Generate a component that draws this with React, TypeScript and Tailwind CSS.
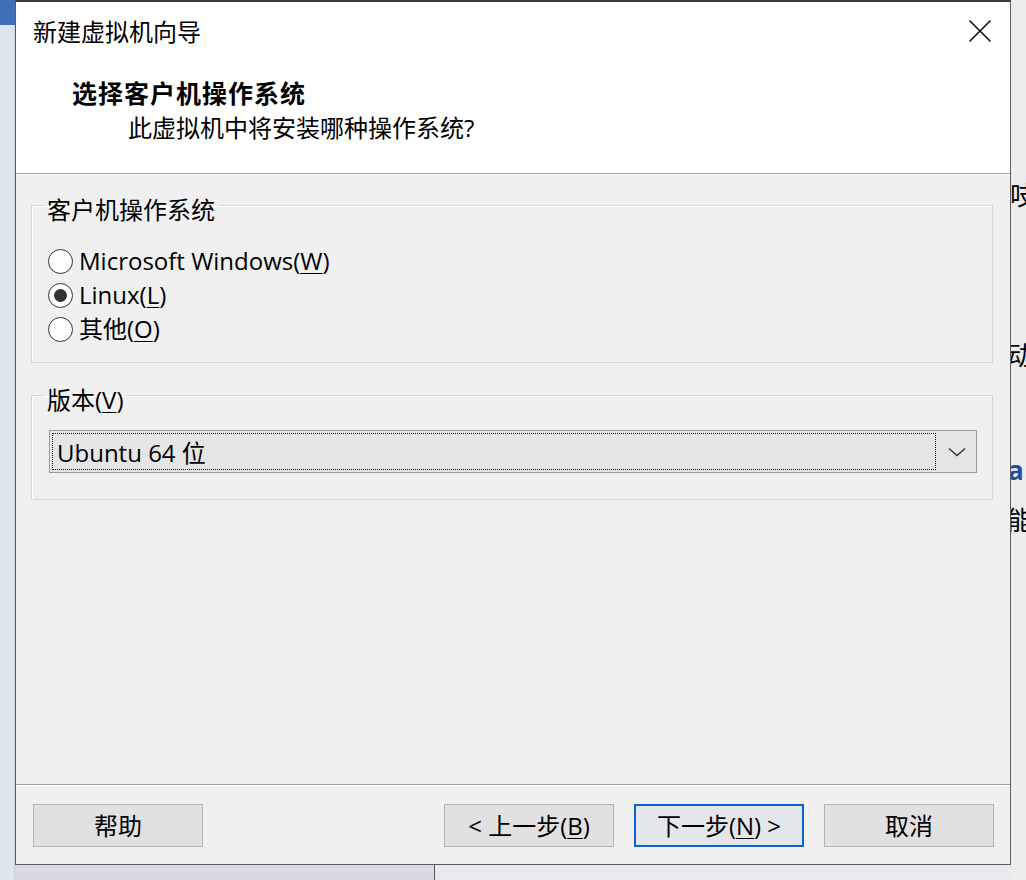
import { useState } from "react";

type Choice = "windows" | "linux" | "other";

// mnemonic letter, underlined like a Win32 accelerator
const Key = ({ k }: { k: string }) => <span className="underline underline-offset-[3px] decoration-1">{k}</span>;

const Radio = ({ on, onPick, children }: { on: boolean; onPick: () => void; children: React.ReactNode }) => (
  <button onClick={onPick} className="flex items-center h-[34px] gap-[6px] text-left">
    <span className="w-[25px] h-[25px] rounded-full border-[1.5px] border-[#333] bg-white flex items-center justify-center">
      {on && <span className="w-[13px] h-[13px] rounded-full bg-[#333]" />}
    </span>
    <span className="leading-[34px]">{children}</span>
  </button>
);

const WinButton = ({ focused, children }: { focused?: boolean; children: React.ReactNode }) => (
  <button
    className={
      focused
        ? "w-[170px] h-[43px] border-2 border-[#0a64c8] bg-[#e3e6ea] leading-[39px] text-center"
        : "w-[170px] h-[43px] border border-[#b4b4b4] bg-[#e1e1e1] leading-[41px] text-center"
    }
  >
    {children}
  </button>
);

export default function App() {
  const [os, setOs] = useState<Choice>("linux");

  return (
    <div className="w-[1026px] h-[880px] flex overflow-hidden bg-[#e8e8ec] text-[24px] text-black font-['Open_Sans','Noto_Sans_CJK_SC',sans-serif]">
      {/* left edge of the desktop behind */}
      <div className="w-[15px] flex flex-col">
        <div className="h-[25px] bg-[#3f6fb4]" />
        <div className="flex-1 bg-[#dfe5ec] border-r border-[#c9d0d8]" />
      </div>

      {/* dialog column */}
      <div className="w-[996px] flex flex-col">
        <div className="h-[865px] flex flex-col border-t-2 border-t-[#3c3c3c] border-x border-x-[#5c5c5c] border-b border-b-[#5c5c5c] bg-[#f0f0f0]">
          {/* header */}
          <div className="h-[171px] bg-white flex flex-col">
            <div className="h-[60px] flex items-center justify-between pl-[17px] pr-[18px]">
              <span className="leading-[30px]">新建虚拟机向导</span>
              <svg width="24" height="24" viewBox="0 0 24 24" className="mt-[-2px]">
                <path d="M1.5 1.5 L22.5 22.5 M22.5 1.5 L1.5 22.5" stroke="#111" strokeWidth="1.6" fill="none" />
              </svg>
            </div>
            <div className="mt-[15px] pl-[56px] leading-[32px] text-[25px] font-bold tracking-[1px]">选择客户机操作系统</div>
            <div className="mt-[3px] pl-[112px] leading-[32px]">此虚拟机中将安装哪种操作系统?</div>
          </div>
          <div className="h-px bg-[#a0a0a0]" />
          <div className="h-px bg-white" />

          {/* body */}
          <div className="flex-1 flex flex-col">
            <fieldset className="mt-[13px] ml-[15px] mr-[17px] border border-[#d8d8d8] pl-[16px] pb-[16px] shadow-[inset_1px_1px_0_#fff]">
              <legend className="ml-[-4px] px-[3px] pt-[10px] leading-[24px]">客户机操作系统</legend>
              <div className="pt-[22px] flex flex-col items-start">
                <Radio on={os === "windows"} onPick={() => setOs("windows")}>
                  Microsoft Windows(<Key k="W" />)
                </Radio>
                <Radio on={os === "linux"} onPick={() => setOs("linux")}>
                  Linux(<Key k="L" />)
                </Radio>
                <Radio on={os === "other"} onPick={() => setOs("other")}>
                  其他(<Key k="O" />)
                </Radio>
              </div>
            </fieldset>

            <fieldset className="mt-[15px] ml-[15px] mr-[17px] border border-[#d8d8d8] pl-[17px] pr-[15px] pb-[26px] shadow-[inset_1px_1px_0_#fff]">
              <legend className="ml-[-5px] px-[3px] pt-[10px] leading-[24px]">
                版本(<Key k="V" />)
              </legend>
              <div className="mt-[18px] h-[43px] flex border border-[#9a9a9a] bg-[#e5e5e5]">
                <div className="flex-1 m-[2px] border border-dotted border-[#111] pl-[4px] leading-[37px]">Ubuntu 64 位</div>
                <div className="w-[38px] flex items-center justify-center">
                  <svg width="18" height="10" viewBox="0 0 18 10">
                    <path d="M1 1.5 L9 8.5 L17 1.5" stroke="#333" strokeWidth="1.4" fill="none" />
                  </svg>
                </div>
              </div>
            </fieldset>
          </div>

          <div className="h-px bg-[#a0a0a0]" />
          <div className="h-px bg-white" />

          {/* footer buttons */}
          <div className="h-[78px] flex items-start pt-[18px] pl-[17px] pr-[16px]">
            <WinButton>帮助</WinButton>
            <div className="flex-1" />
            <div className="flex gap-[20px]">
              <WinButton>
                &lt; 上一步(<Key k="B" />)
              </WinButton>
              <WinButton focused>
                下一步(<Key k="N" />) &gt;
              </WinButton>
              <WinButton>取消</WinButton>
            </div>
          </div>
        </div>

        {/* desktop below the dialog */}
        <div className="flex-1 flex">
          <div className="w-[420px] bg-[#dad9e4] border-r border-[#555]" />
          <div className="flex-1 bg-[#e9e9ee]" />
        </div>
      </div>

      {/* page behind, on the right: only the left edge of its text shows */}
      <div className="flex-1 bg-[#ededed] overflow-hidden flex flex-col text-[26px] leading-[30px] whitespace-nowrap">
        <span className="mt-[180px] ml-[-1px]">吱</span>
        <span className="mt-[130px] ml-[-4px]">动</span>
        <span className="mt-[85px] ml-[-3px] font-bold text-[#1d4f9c]">a</span>
        <span className="mt-[20px] ml-[-4px]">能</span>
      </div>
    </div>
  );
}
